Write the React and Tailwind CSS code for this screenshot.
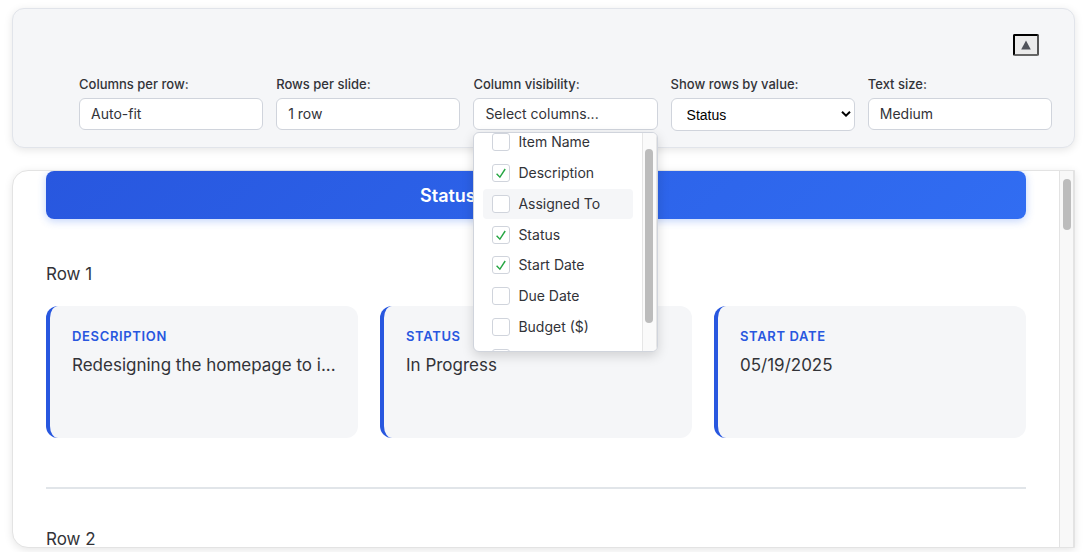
import React, { useState } from "react";

const initialColumns = [
  { name: "Item Name", on: false },
  { name: "Description", on: true },
  { name: "Assigned To", on: false, active: true },
  { name: "Status", on: true },
  { name: "Start Date", on: true },
  { name: "Due Date", on: false },
  { name: "Budget ($)", on: false },
  { name: "", on: false },
];

const cards = [
  { label: "Description", value: "Redesigning the homepage to i..." },
  { label: "Status", value: "In Progress" },
  { label: "Start Date", value: "05/19/2025" },
];

function Field({ id, label, children }) {
  return (
    <div className="relative min-w-0">
      <label htmlFor={id} className="mb-1 block text-[13px] leading-5 font-medium text-[#323338]">
        {label}
      </label>
      {children}
    </div>
  );
}

function PickerField({ id, label, value, children }) {
  return (
    <Field id={id} label={label}>
      <button
        id={id}
        type="button"
        className="block h-8 w-full truncate rounded-md border border-[#d0d4dc] bg-white px-[11px] text-left text-sm text-[#323338]"
      >
        {value}
      </button>
      {children}
    </Field>
  );
}

function ColumnMenu() {
  const [columns, setColumns] = useState(initialColumns);
  const toggle = (name) =>
    setColumns(columns.map((c) => (c.name === name ? { ...c, on: !c.on } : c)));

  return (
    <div className="absolute top-full left-0 z-10 mt-px flex h-[220px] w-full overflow-hidden rounded-md border border-[#d0d4dc] bg-white shadow-[0_4px_12px_rgba(0,0,0,0.15)]">
      <div className="min-w-0 flex-1 px-[9px]">
        <div className="-mt-1.5 grid h-[246px] grid-rows-8">
          {columns.map((c) => (
            <label
              key={c.name}
              className={`flex items-center gap-2 rounded px-[9px] text-sm text-[#323338] ${c.active ? "bg-[#f5f6f8]" : ""}`}
            >
              <span className="relative size-[18px] shrink-0">
                <input
                  type="checkbox"
                  checked={c.on}
                  onChange={() => toggle(c.name)}
                  className="block size-full appearance-none rounded-[3px] border border-[#d0d4dc] bg-white"
                />
                {c.on && (
                  <svg
                    viewBox="0 0 18 18"
                    className="pointer-events-none absolute inset-0 size-full fill-none stroke-[#28a745]"
                    strokeWidth="1.4"
                  >
                    <path d="M4.6 9.7 7.9 13.2 13.2 5" />
                  </svg>
                )}
              </span>
              <span className="truncate">{c.name}</span>
            </label>
          ))}
        </div>
      </div>
      <div className="flex w-[15px] justify-center border-x border-[#e6e6e6] bg-[#fafafa] pt-4">
        <div className="h-[174px] w-2 rounded-full bg-[#bcbcbc]" />
      </div>
    </div>
  );
}

function RowHeading({ children }) {
  return <h2 className="text-[17px] leading-7 text-[#323338]">{children}</h2>;
}

export default function App() {
  return (
    <main className="bg-white pt-2 pr-2.5 pb-1 pl-3 font-['Inter',sans-serif]">
      <section className="relative z-10 rounded-xl border border-[#e1e4ea] bg-[#f5f6f8] pt-[25px] pr-[22px] pb-4 pl-[66px] shadow-[0_2px_8px_rgba(0,0,0,0.1)]">
        <div className="flex justify-end pr-[13px]">
          <button
            type="button"
            aria-label="Collapse"
            className="flex h-[22px] w-[26px] items-center justify-center rounded-xs border-2 border-t-black border-r-[#555] border-b-[#666] border-l-black bg-[#ebebeb]"
          >
            <svg viewBox="0 0 10 10" className="size-2.5 fill-[#505259]">
              <path d="M5 .5 9.8 9.5H.2Z" />
            </svg>
          </button>
        </div>
        <div className="mt-[18px] grid grid-cols-5 gap-[13px]">
          <PickerField id="per-row" label="Columns per row:" value="Auto-fit" />
          <PickerField id="per-slide" label="Rows per slide:" value="1 row" />
          <PickerField id="visibility" label="Column visibility:" value="Select columns...">
            <ColumnMenu />
          </PickerField>
          <Field id="by-value" label="Show rows by value:">
            <div className="relative">
              <select
                id="by-value"
                className="block h-[33px] w-full appearance-none rounded-md border border-[#d0d4dc] bg-white px-[15px] font-['Liberation_Sans',sans-serif] text-sm text-black"
              >
                <option>Status</option>
              </select>
              <svg
                viewBox="0 0 10 6"
                className="pointer-events-none absolute top-[13px] right-1 h-1.5 w-2.5 fill-none stroke-black"
                strokeWidth="2"
              >
                <path d="M1 .8 5 4.6 9 .8" />
              </svg>
            </div>
          </Field>
          <PickerField id="text-size" label="Text size:" value="Medium" />
        </div>
      </section>

      <section className="mt-[22px] flex h-[378px] overflow-hidden rounded-l-2xl border border-[#e3e3e3] bg-white shadow-[0_2px_8px_rgba(0,0,0,0.1)]">
        <div className="min-w-0 flex-1 px-[33px]">
          <h1 className="flex h-12 items-center justify-center rounded-lg bg-linear-135 from-[#2857df] to-[#316df2] pt-0.5 text-lg font-semibold text-white shadow-[0_2px_8px_rgba(49,109,242,0.3)]">
            <span className="w-[232px]">Status</span>
          </h1>
          <div className="mt-[41px]">
            <RowHeading>Row 1</RowHeading>
          </div>
          <div className="mt-[18px] grid grid-cols-3 gap-[22px]">
            {cards.map((c) => (
              <article
                key={c.label}
                className="h-[132px] min-w-0 rounded-xl border-l-4 border-[#2857df] bg-[#f5f6f8] px-[22px] pt-5"
              >
                <h3 className="text-[13px] leading-5 font-semibold tracking-wider text-[#2857df] uppercase">
                  {c.label}
                </h3>
                <p className="mt-[5px] truncate text-[17px] leading-7 text-[#323338]">{c.value}</p>
              </article>
            ))}
          </div>
          <hr className="mt-[49px] border-t-2 border-[#e1e5e9]" />
          <div className="mt-9">
            <RowHeading>Row 2</RowHeading>
          </div>
        </div>
        <div className="flex w-[15px] justify-center border-x border-[#e3e3e3] bg-[#f8f8f8] pt-2">
          <div className="h-[51px] w-2 rounded-full bg-[#bcbcbc]" />
        </div>
      </section>
    </main>
  );
}
